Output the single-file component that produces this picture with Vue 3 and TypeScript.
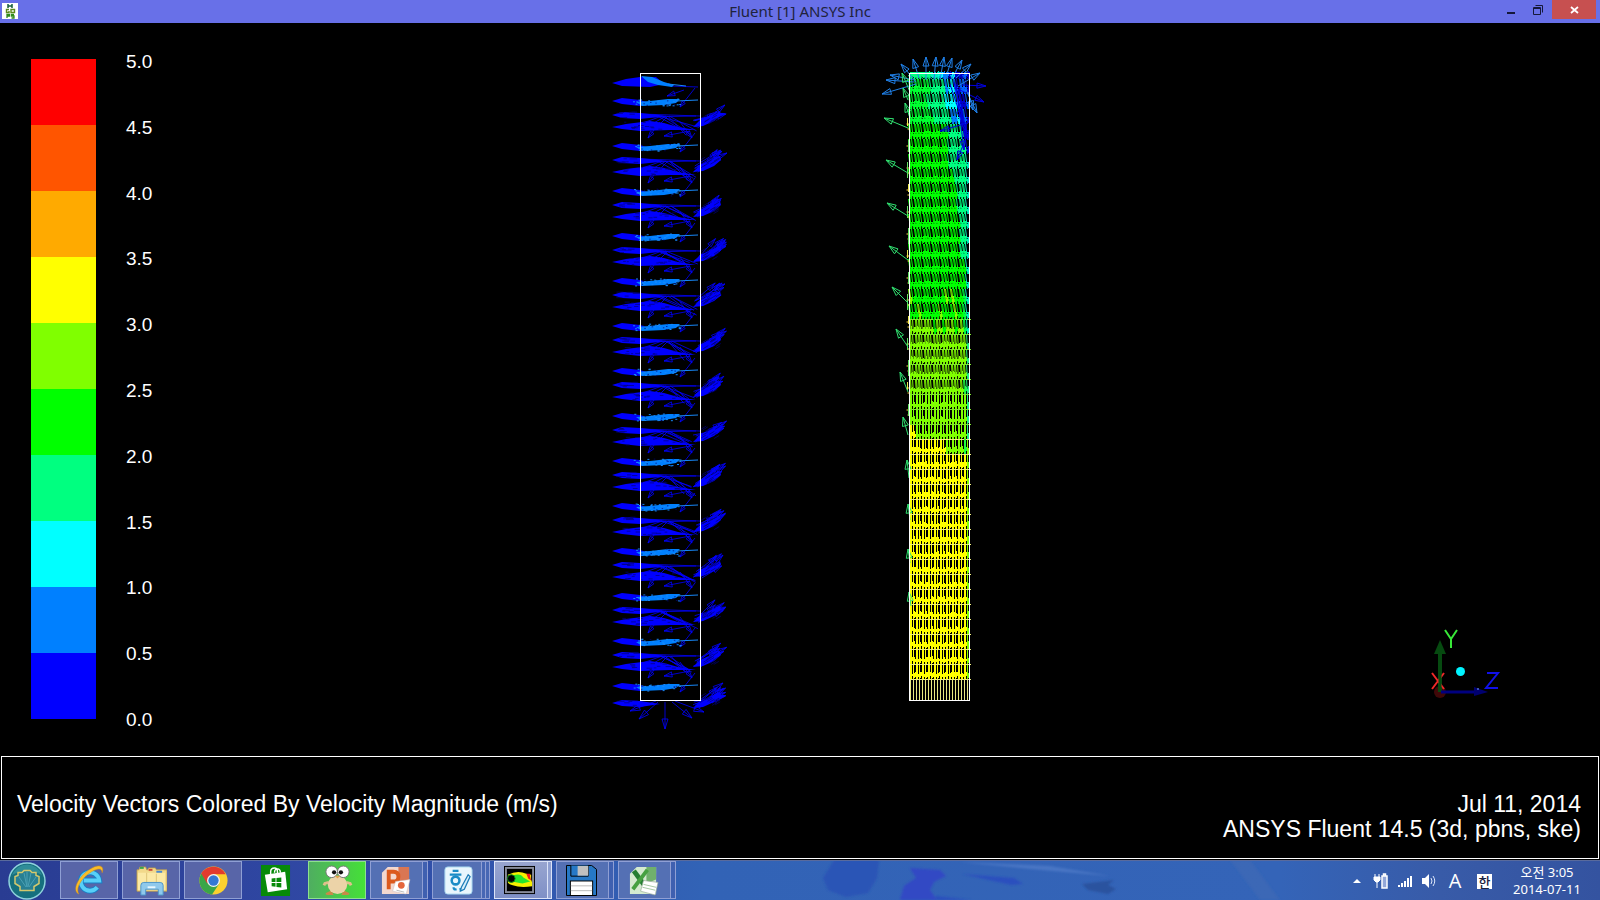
<script setup lang="ts">
interface Band { color: string; from: string }
interface Mark { color: string; d: string }
type Point = [number, number]

const bands: Band[] = [
  { color: '#ff0000', from: '5.0' },
  { color: '#ff5500', from: '4.5' },
  { color: '#ffaa00', from: '4.0' },
  { color: '#ffff00', from: '3.5' },
  { color: '#80ff00', from: '3.0' },
  { color: '#00ff00', from: '2.5' },
  { color: '#00ff80', from: '2.0' },
  { color: '#00ffff', from: '1.5' },
  { color: '#0080ff', from: '1.0' },
  { color: '#0000ff', from: '0.5' },
]
const labels = [...bands.map((b) => b.from), '0.0']

let seed = 41
function rnd(): number {
  seed = (seed * 16807) % 2147483647
  return seed / 2147483647
}
function between(a: number, b: number): number {
  return a + (b - a) * rnd()
}
function f(n: number): string {
  return n.toFixed(1)
}

function arrow(from: Point, to: Point, head = 9, half = 2.6): string {
  const dx = to[0] - from[0]
  const dy = to[1] - from[1]
  const len = Math.hypot(dx, dy) || 1
  const ux = dx / len
  const uy = dy / len
  const bx = to[0] - ux * head
  const by = to[1] - uy * head
  return `M${f(from[0])} ${f(from[1])}L${f(to[0])} ${f(to[1])}L${f(bx - uy * half)} ${f(by + ux * half)}L${f(bx + uy * half)} ${f(by - ux * half)}L${f(to[0])} ${f(to[1])}`
}

/* Radial flow column: repeating layers of slow vectors. */
const slowFill: string[] = []
const slowLine: string[] = []
const midFill: string[] = []
const midSpeck: string[] = []
const darkSpeck: string[] = []

function leftWedge(y: number, end: number): void {
  slowFill.push(`M612 ${y}L622 ${y - 3}L640 ${y - 2}L${end} ${y + 1}L640 ${y + 4}L622 ${y + 3}Z`)
  for (let i = 0; i < 6; i++) darkSpeck.push(`M${f(between(616, 634))} ${f(y + between(-3, 3))}h${f(between(3, 8))}`)
}
function rightFin(y: number): void {
  slowFill.push(`M693 ${y + 2}L700 ${y - 5}L711 ${y - 10}L720 ${y - 14}L721 ${y - 10}L714 ${y - 4}L703 ${y + 1}Z`)
  for (let i = 0; i < 8; i++) {
    slowLine.push(arrow([between(693, 702), y + between(-5, 3)], [between(715, 727), y - between(9, 22)], 9, 2.2))
  }
  for (let i = 0; i < 12; i++) darkSpeck.push(`M${f(between(700, 716))} ${f(y - between(0, 11))}l5 -3`)
}
for (let k = 0; k < 14; k++) {
  const y = 102 + k * 45
  slowFill.push(`M612 ${y - 1}L622 ${y - 4}L640 ${y - 2}L650 ${y + 1}L640 ${y + 4}L622 ${y + 2}Z`)
  midFill.push(`M636 ${y}L650 ${y - 1}L668 ${y - 3}L680 ${y - 3}L676 ${y + 1}L664 ${y + 3}L642 ${y + 4}Z`)
  for (let i = 0; i < 24; i++) midSpeck.push(`M${f(between(633, 680))} ${f(y + between(-3, 4))}h2`)
  for (let i = 0; i < 7; i++) darkSpeck.push(`M${f(between(640, 676))} ${f(y + between(-3, 4))}h1.5`)
  midSpeck.push(`M676 ${y - 1}L698 ${y - 2}`)
  slowLine.push(arrow([695, y - 14], [680, y + 5], 6, 2))
  if (k < 13) {
    leftWedge(y + 13, 668)
    slowLine.push(`M640 ${y + 12}L700 ${y + 14}M640 ${y + 15}L696 ${y + 14}`)
    slowLine.push(`M662 ${y + 14}L640 ${y + 22}M666 ${y + 14}L652 ${y + 22}M668 ${y + 14}L660 ${y + 22}`)
    slowFill.push(`M612 ${y + 25}L626 ${y + 22}L650 ${y + 19}L664 ${y + 21}L678 ${y + 25}L696 ${y + 28}L670 ${y + 28}L640 ${y + 29}L622 ${y + 27}Z`)
    for (let i = 0; i < 14; i++) darkSpeck.push(`M${f(between(622, 675))} ${f(y + between(20, 28))}h${f(between(2, 6))}`)
    for (let i = 0; i < 5; i++) slowLine.push(`M${f(between(656, 672))} ${y + 14}L${f(between(684, 698))} ${f(y + between(24, 34))}`)
    slowLine.push(arrow([660, y + 20], [648, y + 36], 7, 2.2))
    slowLine.push(arrow([690, y + 29], [664, y + 34], 8, 2.6))
    slowLine.push(arrow([680, y + 20], [692, y + 36], 7, 2.2))
    rightFin(y + 23)
  }
}
slowFill.push('M612 83L626 79L640 77L656 77L664 84L650 87L622 86Z')
midFill.push('M641 76L652 77L664 82L674 85L672 87L658 85L648 82Z')
midSpeck.push('M668 84L686 86')
slowLine.push('M670 86L698 87', arrow([684, 90], [667, 96], 8, 2.4))
leftWedge(703, 660)
rightFin(706)
for (const [a, b] of [
  [[665, 702], [665, 729]],
  [[658, 702], [639, 719]],
  [[656, 701], [630, 711]],
  [[672, 702], [692, 718]],
  [[675, 701], [704, 712]],
  [[700, 700], [723, 683]],
  [[700, 704], [724, 696]],
] as [Point, Point][]) slowLine.push(arrow(a, b, 10, 3))

/* Axial flow column: regular grid of vectors, fast at the inlet. */
const cells = new Map<string, string[]>()
function put(color: string, d: string): void {
  const list = cells.get(color)
  if (list) list.push(d)
  else cells.set(color, [d])
}
function speedColor(x: number, y: number): string {
  const t = (x - 910) / 59
  const j = between(-0.06, 0.06)
  if (y < 155 && t > 0.66 + (y - 75) * 0.0036 + j && t < 0.97) return rnd() < 0.75 ? '#0000c8' : '#0060ff'
  if (y < 125 && t > 0.54 + (y - 75) * 0.003 + j) return rnd() < 0.5 ? '#0080ff' : '#00ffff'
  if (y < 90) return t + j > 0.35 ? '#00f0c0' : '#00ff80'
  if (t > 0.93) return y < 340 ? '#00f0c0' : y < 440 ? '#20f080' : '#80ff00'
  if (y < 130) return t + j < 0.35 ? '#00ff30' : '#00ff80'
  if (y < 300) return t + j > 0.98 - (300 - y) * 0.0022 ? '#00ff80' : '#00ff00'
  if (y < 345) return t + j > 0.85 ? '#00ff40' : rnd() < (y - 290) / 50 ? '#80ff00' : '#00ff00'
  if (y < 432 + t * 30) return t + j > 0.92 ? '#20ff40' : '#80ff00'
  return '#ffff00'
}
const rowStep = 15
for (let r = 0; r < 41; r++) {
  const y = 679 - r * rowStep
  const lean = y < 330 ? 2 : y < 400 ? 1 : 0
  for (let i = 0; i < 20; i++) {
    const x = 910 + i * 3
    const color = speedColor(x, y - 4)
    const top = Math.max(y - rowStep, 75)
    put(color, `M${x + 0.5} ${y}L${x + 0.5 - lean} ${top}`)
    if (y < 430 ? i % 3 !== 1 : i % 2 === 0) put(color, `M${x + 1.5} ${y}L${x + 1.5 - lean} ${top}`)
    put(color, `M${x} ${y - 4.5}h3M${x} ${y - 3.5}h3M${x} ${y - 2.5}h${i % 3 ? 3 : 2}`)
    put(color, `M${x + 1.5} ${y - 3}v${rnd() < 0.5 ? 2 : 3}`)
    put(color, `M${x + 1.5} ${y - 5}v-${1 + Math.floor(rnd() * 3)}`)
    if (rnd() < 0.4) put(color, `M${x + 2.5} ${y - 5}v-2`)
    if (y < 330) put(color, `M${x} ${y - 6.5}h${rnd() < 0.5 ? 3 : 2}`)
  }
  if (y > 310) put(y > 430 ? '#f0f080' : '#80e830', `M909 ${y + 0.5}h62`)
}
for (let i = 0; i < 20; i++) put('#e8e880', `M${910.5 + i * 3} 679V700`)
for (let r = 0; r < 14; r++) {
  put(r % 3 ? '#60e060' : '#e8e850', `M${907.5 + (r % 2)} ${118 + r * 22}v${8 + (r % 3) * 4}`)
  put('#ffd840', `M906.5 ${124 + r * 22}h3v5h-2`)
}
const grid: Mark[] = [...cells].map(([color, list]) => ({ color, d: list.join('') }))

const wallArrows: string = ([
  [[908, 128], [884, 118]],
  [[908, 173], [886, 160]],
  [[908, 216], [887, 203]],
  [[908, 260], [889, 246]],
  [[908, 303], [892, 287]],
  [[908, 347], [896, 329]],
  [[908, 392], [900, 372]],
  [[908, 435], [903, 417]],
  [[909, 478], [907, 460]],
  [[910, 520], [908, 504]],
  [[910, 563], [908, 549]],
  [[911, 606], [909, 592]],
  [[908, 100], [903, 88]],
  [[910, 118], [905, 103]],
  [[910, 92], [902, 73]],
] as [Point, Point][]).map(([a, b]) => arrow(a, b, 9, 3)).join('')

const outletArrows: string = ([
  [[916, 84], [882, 94]],
  [[914, 82], [886, 80]],
  [[914, 80], [890, 75]],
  [[916, 82], [901, 64]],
  [[919, 78], [913, 59]],
  [[926, 80], [926, 57]],
  [[934, 80], [936, 57]],
  [[940, 80], [944, 57]],
  [[945, 80], [952, 58]],
  [[951, 80], [962, 60]],
  [[956, 78], [971, 64]],
  [[958, 86], [980, 73]],
  [[966, 90], [977, 113]],
  [[968, 92], [973, 110]],
] as [Point, Point][]).map(([a, b]) => arrow(a, b, 9, 3)).join('')

const eddyArrows: string = ([
  [[962, 85], [986, 86]],
  [[960, 90], [984, 102]],
  [[954, 82], [966, 132]],
  [[950, 84], [962, 120]],
  [[956, 84], [964, 150]],
  [[964, 124], [940, 131]],
  [[958, 90], [968, 140]],
  [[966, 138], [957, 160]],
] as [Point, Point][]).map(([a, b]) => arrow(a, b, 9, 2.6)).join('')
</script>

<template>
  <div class="desktop">
    <header class="titlebar">
      <svg class="app-icon" viewBox="0 0 16 16" aria-hidden="true">
        <rect width="16" height="16" fill="#fff" />
        <path d="M6 1v4M6 3h4M10 1v4" stroke="#17603c" stroke-width="1.500" fill="none" />
        <path d="M7 6.500H4.500v3H7V8M9 6.500h3.500v3H9z" stroke="#5c8a1c" stroke-width="1.400" fill="none" />
        <path d="M5 15v-3.500h2.500V13H5M12 11.500H9.500V13H12v2H9.500" stroke="#2f8a1c" stroke-width="1.300" fill="none" />
      </svg>
      <h1>Fluent [1] ANSYS Inc</h1>
      <div class="controls">
        <button type="button" class="control" aria-label="Minimize">
          <svg viewBox="0 0 12 12"><path d="M3 9h8" stroke="#15183a" stroke-width="2" /></svg>
        </button>
        <button type="button" class="control" aria-label="Restore">
          <svg viewBox="0 0 12 12"><path d="M1.500 3.500h7v7h-7zM1.500 4.500h7M3.500 1.500h7v7" fill="none" stroke="#15183a" /></svg>
        </button>
        <button type="button" class="control close" aria-label="Close">
          <svg viewBox="0 0 12 12"><path d="M3 3l7 6M10 3l-7 6" stroke="#fff" stroke-width="1.800" /></svg>
        </button>
      </div>
    </header>

    <main class="scene">
      <section class="legend" aria-label="Velocity scale">
        <div class="ramp">
          <svg v-for="band in bands" :key="band.color" viewBox="0 0 1 1" preserveAspectRatio="none" shape-rendering="crispEdges">
            <rect width="1" height="1" :fill="band.color" />
          </svg>
        </div>
        <ol class="labels">
          <li v-for="label in labels" :key="label">{{ label }}</li>
        </ol>
      </section>

      <svg class="plot" viewBox="200 23 1200 733" role="img" aria-label="Velocity vectors in two pipes">
        <g stroke="#0000ff" stroke-width="1" fill="none">
          <path :d="slowFill.join('')" fill="#0000ff" stroke="none" />
          <path :d="slowLine.join('')" opacity="0.8" />
          <path :d="midFill.join('')" fill="#0080ff" stroke="none" />
          <path :d="midSpeck.join('')" stroke="#1888f8" />
          <path :d="darkSpeck.join('')" stroke="#000078" opacity="0.7" />
        </g>
        <rect x="640.500" y="73.500" width="60" height="627" class="outline" />

        <g fill="none">
          <path v-for="mark in grid" :key="mark.color" :d="mark.d" :stroke="mark.color" />
        </g>
        <path :d="eddyArrows" stroke="#0000e0" fill="none" />
        <path :d="outletArrows" stroke="#2080e8" fill="none" />
        <path :d="wallArrows" stroke="#30e070" fill="none" />
        <rect x="909.500" y="73.500" width="60" height="627" class="outline" />
      </svg>

      <div class="triad">
        <svg viewBox="0 0 110 100" role="img" aria-label="Axes">
          <circle cx="30" cy="77" r="6" fill="#400808" />
          <path d="M30 77V37" stroke="#064a10" stroke-width="4" />
          <path d="M30 25l-6 14h12z" fill="#064a10" />
          <path d="M22 74L34 58M34 74L22 58" stroke="#f02828" stroke-width="2" />
          <path d="M30 77V56" stroke="#064a10" stroke-width="3" />
          <path d="M31 77H64" stroke="#000080" stroke-width="3" />
          <path d="M64 72l14 5l-14 4z" fill="#000070" />
          <circle cx="68" cy="74" r="1" fill="#5070d0" />
          <path d="M35 15l6 9v9M47 15l-6 9" stroke="#38e838" stroke-width="2" fill="none" />
          <path d="M77 58h11L76 73h12" stroke="#1010e8" stroke-width="2" fill="none" />
          <circle cx="50.500" cy="56.500" r="4.500" fill="#00f4ff" />
        </svg>
      </div>
    </main>

    <section class="caption">
      <p>Velocity Vectors Colored By Velocity Magnitude (m/s)</p>
      <p class="meta">Jul 11, 2014<br />ANSYS Fluent 14.5 (3d, pbns, ske)</p>
    </section>

    <footer class="taskbar">
      <svg class="wallpaper" viewBox="0 0 1600 40" preserveAspectRatio="none" aria-hidden="true">
        <defs>
          <linearGradient id="sea" x1="0" x2="1" y1="0" y2="0">
            <stop offset="0" stop-color="#293c92" />
            <stop offset="0.2" stop-color="#3048a4" />
            <stop offset="0.440" stop-color="#3263b6" />
            <stop offset="0.8" stop-color="#3464b8" />
            <stop offset="0.9" stop-color="#385ba8" />
            <stop offset="1" stop-color="#3453a0" />
          </linearGradient>
          <filter id="soft"><feGaussianBlur stdDeviation="1" /></filter>
        </defs>
        <rect width="1600" height="40" fill="url(#sea)" />
        <g filter="url(#soft)">
          <path d="M834 0h45l-2 18l-9 15l-22 4l-18-7l-5-12z" fill="#2c54b6" />
          <path d="M910 8l30 2l6 6l-12 6l-4 8l7 10h-37l4-14l12-8z" fill="#3348c4" />
          <path d="M936 36l36 4h-36zM962 14l52 4l9 6l-12 1z" fill="#2c50be" />
          <path d="M1082 24l32-4l-6 5l8 4l-8 5l-20-4z" fill="#2b529f" />
          <path d="M960 2l90 4l60 10l-80-7z" fill="#4a76c4" />
          <path d="M1230 0l30 40h20l-30-40z" fill="#4069b4" opacity="0.6" />
        </g>
        <path d="M0 0.500h1600" stroke="#596a9c" />
      </svg>

      <nav class="apps" aria-label="Taskbar">
        <button type="button" class="start" aria-label="Start">
          <svg viewBox="0 0 38 38">
            <circle cx="19" cy="19" r="18" fill="#16707e" stroke="#8ed2dc" stroke-width="1.500" />
            <path d="M4 13a16 16 0 0 1 30 0q-15-8-30 0z" fill="#2f8d98" />
            <path d="M12 28.500h14v-4l5-3v-7l-3-1v-3h-4l-2-2h-6l-2 2h-4v3l-3 1v7l5 3z" fill="#287f93" stroke="#d4c86c" stroke-width="1.500" />
            <path d="M18 25l-7-10M19 25l-3-14M20 25l3-14M21 25l7-10M19 25V10" stroke="#4aa0b4" />
          </svg>
        </button>
        <button type="button" class="app" aria-label="Internet Explorer">
          <svg viewBox="0 0 32 32">
            <path d="M24 23a9.500 9.500 0 1 1 2-7H8" fill="none" stroke="#187fc6" stroke-width="6" />
            <path d="M24 23a9.500 9.500 0 1 1 2-7H10" fill="none" stroke="#58cff8" stroke-width="4" />
            <path d="M5 30C-3 26 5 11 17 4C25-1 32 0 29 8C29 3 25 3 18 7C8 13 1 24 5 30z" fill="#fbbd26" stroke="#d98f10" stroke-width="0.500" />
          </svg>
        </button>
        <button type="button" class="app" aria-label="File Explorer">
          <svg viewBox="0 0 32 32">
            <path d="M1 5h2l1-3h6l1 3h1l1-2h7l1 2h11v22H1z" fill="#f2d98a" stroke="#b99a48" stroke-width="0.800" />
            <path d="M2 8h28v18H2z" fill="#fbe9a5" />
            <path d="M4 2h4v2H4z" fill="#3ba64a" /><path d="M13 4h4v2h-4z" fill="#cd4937" /><path d="M21 6h6v2h-6z" fill="#4a8ad0" />
            <path d="M11 8v14M21 9v13" stroke="#ddc477" />
            <path d="M5 31V21q0-3 3-3h17q3 0 3 3v10h-5v-6H10v6z" fill="#8fc9ec" stroke="#4c95ca" />
            <path d="M12 23h8" stroke="#e8f8ff" stroke-width="2" />
          </svg>
        </button>
        <button type="button" class="app" aria-label="Chrome">
          <svg viewBox="0 0 32 32">
            <circle cx="16" cy="16" r="14.500" fill="#fbd12f" />
            <path d="M16 16L3.400 8.800A14.500 14.500 0 0 0 14.500 30.500L22 19z" fill="#3aa648" />
            <path d="M3.400 8.800A14.500 14.500 0 0 1 28.600 9.500H16L9.500 19z" fill="#e23b2e" />
            <circle cx="16" cy="16" r="6.700" fill="#f4f4ef" />
            <circle cx="16" cy="16" r="5.300" fill="#3478d4" />
          </svg>
        </button>
        <button type="button" class="app plain" aria-label="Store">
          <svg viewBox="0 0 32 32">
            <rect x="1" y="0" width="30" height="32" fill="#078a09" />
            <path d="M5 10l21-3l2 18l-20 3z" fill="#fff" />
            <path d="M11 12V7q0-4 4-4q3 0 3 4v3M15 8q0-4 3-4q3 0 3 4" fill="none" stroke="#fff" stroke-width="1.500" />
            <path d="M12 14l4-.5v4h-4zM17 13.400l5-.6v4.700h-5zM12 18.500h4v4l-4-.5zM17 18.500h5v4.800l-5-.6z" fill="#078a09" />
          </svg>
        </button>
        <button type="button" class="app messenger" aria-label="Messenger">
          <svg viewBox="0 0 32 32">
            <path d="M10 26l-6 3q-1 2 2 2h6zM22 26l6 3q1 2-2 2h-6z" fill="#c98a48" />
            <path d="M7 18l-4 1l-1 2M25 18l4 1l1 2" stroke="#e0bf8c" stroke-width="3" fill="none" />
            <ellipse cx="16" cy="20.500" rx="10" ry="9.500" fill="#ecd3a8" />
            <circle cx="10" cy="7" r="6" fill="#fff" stroke="#777" /><circle cx="22" cy="7" r="6" fill="#fff" stroke="#777" />
            <circle cx="12.500" cy="7.500" r="2.200" fill="#111" /><circle cx="19.500" cy="7.500" r="2.200" fill="#111" />
            <path d="M13 11h6l-3 3z" fill="#e3a44c" />
          </svg>
        </button>
        <button type="button" class="app stacked" aria-label="PowerPoint">
          <svg viewBox="0 0 32 32">
            <path d="M8 2h22v28H2V8z" fill="#f3d8cf" /><path d="M19 2h11v13l-11 4z" fill="#d97653" />
            <path d="M9 25V7h5q5 0 5 5q0 5-5 5H9" fill="none" stroke="#dc5a1e" stroke-width="4" />
            <path d="M16 17l15-2l-4 15l-14-3z" fill="#fff" stroke="#cbb" stroke-width="0.500" />
            <circle cx="22" cy="21" r="3.500" fill="#e4653c" /><path d="M17 26l8 2" stroke="#bbb" />
          </svg>
        </button>
        <button type="button" class="app stacked many" aria-label="Hangul word processor">
          <svg viewBox="0 0 32 32">
            <rect x="3" y="2" width="28" height="28" rx="3" fill="#e9f6fd" stroke="#a5d6ee" />
            <path d="M11 6h6M8 10h12" stroke="#1b8cc6" stroke-width="2.400" />
            <circle cx="14" cy="16" r="4" fill="none" stroke="#1b8cc6" stroke-width="2.600" />
            <path d="M12 23q0 3 3 2M18 25h2" stroke="#1b8cc6" stroke-width="2.400" fill="none" />
            <path d="M27 10l-7 13l-1 4l4-2l6-13z" fill="#d4eefb" stroke="#1d7cb8" stroke-width="1.300" />
          </svg>
        </button>
        <button type="button" class="app stacked active" aria-label="Fluent">
          <svg viewBox="0 0 32 32">
            <rect x="0.500" y="1.500" width="31" height="28" fill="#898d9c" stroke="#000" />
            <rect x="3" y="4" width="26" height="23" fill="#000" />
            <path d="M4 10Q14 5 23 9l5 1v5l1 3v4q-12 2-20-1q-4-1-5-3z" fill="#f6ef00" />
            <path d="M9 11q8-3 11 2l7 4l-8 2l-11-2z" fill="#28e52c" />
            <path d="M23 9h4v3l1 4l-3-2z" fill="#f01818" />
            <circle cx="7.500" cy="14" r="4" fill="#000" stroke="#0d8d20" />
          </svg>
        </button>
        <button type="button" class="app stacked" aria-label="Save tool">
          <svg viewBox="0 0 32 32">
            <path d="M0.500 0.500h26l5 4v27h-31z" fill="#2678c6" stroke="#000" />
            <path d="M5 0.500v11h18v-11" fill="#2678c6" stroke="#000" /><rect x="12" y="1" width="11" height="10" fill="#c0c0c0" />
            <rect x="4.500" y="16.500" width="23" height="15" fill="#fff" stroke="#000" />
            <path d="M5 21.500h22M5 26.500h22" stroke="#b8b8b8" />
          </svg>
        </button>
        <button type="button" class="app stacked" aria-label="Excel">
          <svg viewBox="0 0 32 32">
            <path d="M9 2h20v28H2V9z" fill="#d4ead0" /><path d="M19 2h10v13l-10 4z" fill="#70b06c" />
            <path d="M6 6l14 19" stroke="#247d33" stroke-width="5" /><path d="M20 5L5 25" stroke="#46a141" stroke-width="4" />
            <path d="M16 16l15 2l-3 13l-15-4z" fill="#fff" stroke="#9aac9a" stroke-width="0.700" />
            <path d="M16 20l13 3M15 23l13 3" stroke="#8fb98d" stroke-width="0.800" />
          </svg>
        </button>
      </nav>

      <div class="tray">
        <button type="button" class="tray-item" aria-label="Show hidden icons">
          <svg viewBox="0 0 16 16"><path d="M4 10l4-4l4 4z" fill="#fff" /></svg>
        </button>
        <button type="button" class="tray-item" aria-label="Power">
          <svg viewBox="0 0 16 16"><path d="M2 1v3M6 1v3M1 4h6v3l-2 2H3L1 7zM4 8v7" stroke="#fff" fill="#fff" /><path d="M9 3h5v12H9zM10.500 1h2v2h-2z" fill="#94a8d8" stroke="#fff" stroke-width="1.500" /></svg>
        </button>
        <button type="button" class="tray-item" aria-label="Network">
          <svg viewBox="0 0 16 16"><path d="M1 14v-2h2v2zM4 14v-4h2v4zM7 14V8h2v6zM10 14V5h2v9zM13 14V3h2v11z" fill="#fff" /></svg>
        </button>
        <button type="button" class="tray-item" aria-label="Volume">
          <svg viewBox="0 0 16 16"><path d="M1 5h3l4-4v14l-4-4H1z" fill="#fff" /><path d="M10 5q2 3 0 6M12 3q3.500 5 0 10" fill="none" stroke="#dfe8fa" /></svg>
        </button>
        <button type="button" class="lang">A</button>
        <button type="button" class="ime"><span>한</span></button>
        <button type="button" class="clock">오전 3:05<br />2014-07-11</button>
      </div>
    </footer>
  </div>
</template>

<style>
body {
  margin: 0;
  background: #000;
}
</style>

<style scoped>
.desktop {
  display: flex;
  flex-direction: column;
  min-height: 100vh;
  background: #000;
  color: #fff;
  font-family: "Liberation Sans", Arial, sans-serif;
}
button {
  margin: 0;
  padding: 0;
  border: 0;
  background: none;
  color: inherit;
  font: inherit;
}
.titlebar {
  display: grid;
  grid-template-columns: 1fr auto 1fr;
  align-items: start;
  height: 23px;
  background: #6870e8;
}
.app-icon {
  width: 16px;
  height: 16px;
  margin: 3px 0 0 2px;
}
.titlebar h1 {
  margin: 0;
  color: #20233c;
  font: 400 15px/22px "Noto Sans", sans-serif;
}
.controls {
  display: flex;
  justify-content: flex-end;
  padding-right: 4px;
}
.control {
  display: grid;
  place-items: center;
  width: 28px;
  height: 19px;
}
.control svg {
  width: 12px;
  height: 12px;
}
.control.close {
  width: 44px;
  background: #c75050;
}
.scene {
  display: flex;
  flex: 1;
}
.legend {
  display: flex;
  gap: 30px;
  flex: 0 0 200px;
  box-sizing: border-box;
  padding: 36px 0 37px 31px;
}
.ramp {
  display: flex;
  flex-direction: column;
  width: 65px;
}
.ramp svg {
  display: block;
  flex: 1;
  width: 100%;
  min-height: 0;
}
.labels {
  display: flex;
  flex-direction: column;
  justify-content: space-between;
  margin: -7px 0 -11px;
  padding: 0;
  list-style: none;
  font-size: 19px;
  line-height: 20px;
}
.plot {
  display: block;
  flex: 1;
  min-width: 0;
}
.outline {
  fill: none;
  stroke: #fff;
}
.triad {
  display: flex;
  align-items: flex-end;
  flex: 0 0 200px;
  padding: 0 0 41px 10px;
  box-sizing: border-box;
}
.triad svg {
  width: 110px;
  height: 100px;
}
.caption {
  display: flex;
  justify-content: space-between;
  box-sizing: border-box;
  min-height: 103px;
  margin: 0 1px 1px;
  padding: 35px 17px 0 15px;
  border: 1px solid #fff;
  font-size: 23px;
  line-height: 25px;
}
.caption p {
  margin: 0;
}
.meta {
  text-align: right;
}
.taskbar {
  position: relative;
  display: flex;
  justify-content: space-between;
  height: 40px;
  overflow: hidden;
}
.wallpaper {
  position: absolute;
  inset: 0;
  width: 100%;
  height: 100%;
}
.apps,
.tray {
  position: relative;
  display: flex;
}
.apps {
  gap: 4px;
  padding: 1px 0 0 8px;
}
.start {
  width: 48px;
  text-align: left;
}
.start svg {
  display: block;
  width: 38px;
  height: 38px;
}
.app {
  display: flex;
  align-items: center;
  justify-content: center;
  box-sizing: border-box;
  width: 58px;
  height: 38px;
  border: 1px solid #8f9fd4;
  background: #5865a8;
}
.app svg {
  width: 31px;
  height: 31px;
}
.app.plain {
  border-color: transparent;
  background: none;
}
.app.messenger {
  border-color: #8fe08f;
  background: linear-gradient(90deg, #4fae60, #45e038);
}
.app.stacked {
  padding-right: 7px;
  background: #5470b4;
  box-shadow: inset -4px 0 #3f60b0, inset -5px 0 #8f9fd4;
}
.app.many {
  box-shadow: inset -3px 0 #4767b4, inset -4px 0 #8f9fd4, inset -7px 0 #4767b4, inset -8px 0 #8f9fd4;
}
.app.active {
  border-color: #dbe3f8;
  background: linear-gradient(180deg, #98a5d0, #7f90c6);
  box-shadow: inset -3px 0 #91a1d2, inset -4px 0 #dbe3f8;
}
.tray {
  align-items: center;
  gap: 8px;
  padding: 2px 18px 0 0;
}
.tray-item {
  width: 16px;
  height: 16px;
}
.tray-item svg {
  display: block;
  width: 16px;
  height: 16px;
}
.lang {
  width: 20px;
  font: 400 20px/24px "Open Sans", "Noto Sans", sans-serif;
}
.ime {
  display: grid;
  place-items: center;
  width: 15px;
  height: 15px;
  margin: 0 12px 0 4px;
  background: #fff;
  color: #1c2340;
  font: 500 13px/15px "Noto Sans CJK KR", sans-serif;
}
.clock {
  width: 70px;
  font: 400 13px/17px "Noto Sans", "Noto Sans CJK KR", sans-serif;
  text-align: center;
  white-space: nowrap;
}
</style>
